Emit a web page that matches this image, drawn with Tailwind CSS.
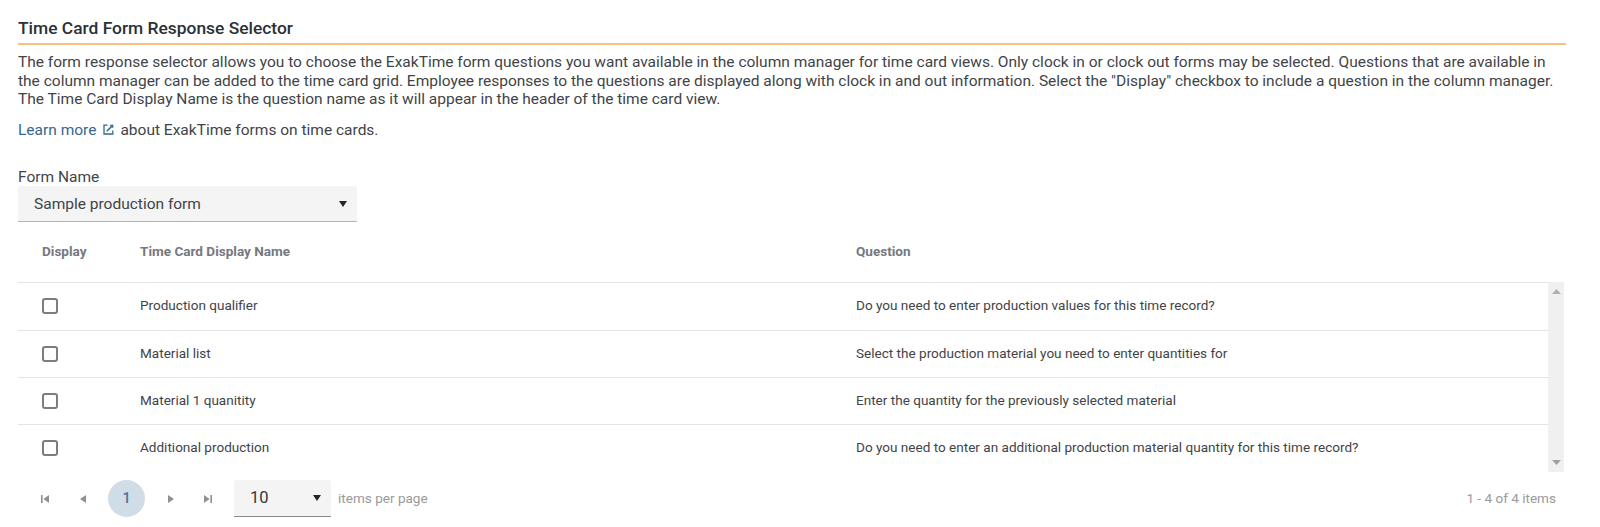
<!DOCTYPE html>
<html><head><meta charset="utf-8">
<script src="https://cdn.jsdelivr.net/npm/@tailwindcss/browser@4"></script>
</head>
<body class="bg-white font-['Roboto',sans-serif] text-[#3f4448] overflow-hidden">
<div class="w-[1600px] h-[527px] pl-[18px] pr-[34px] pt-[18px] flex flex-col">
  <h2 class="text-[17.4px] leading-[20px] font-medium text-[#2b3035] h-[27px] border-b-2 border-[#f8c27e]">Time Card Form Response Selector</h2>
  <p class="text-[15.5px] leading-[18.7px] mt-[8px] w-[1536px]">The form response selector allows you to choose the ExakTime form questions you want available in the column manager for time card views. Only clock in or clock out forms may be selected. Questions that are available in the column manager can be added to the time card grid. Employee responses to the questions are displayed along with clock in and out information. Select the "Display" checkbox to include a question in the column manager. The Time Card Display Name is the question name as it will appear in the header of the time card view.</p>
  <p class="text-[15.5px] leading-[18.7px] mt-[11.4px] flex items-center">
    <span class="text-[#36678c]">Learn more</span>
    <svg class="ml-[7px] mr-[6px]" width="11" height="11" viewBox="0 0 11 11" fill="none" stroke="#36678c" stroke-width="1.3"><path d="M4.5 1.2H1v8.8h8.8V6.5"/><path d="M6.5 .7h3.8v3.8z" fill="#36678c" stroke="none"/><path d="M3.8 7.2 8.6 2.4" stroke-width="1.5"/></svg>
    <span>about ExakTime forms on time cards.</span>
  </p>
  <label class="block text-[15.5px] leading-[18px] mt-[29px]">Form Name</label>
  <div class="w-[339px] h-[36px] bg-[#f4f4f4] rounded-t-[3px] border-b border-[#b5b5b5] flex items-center justify-between pl-[16px] pr-[10px] text-[15.5px]">
    <span class="pt-[1px]">Sample production form</span>
    <svg width="8" height="6" viewBox="0 0 8 6"><path d="M0 0h8L4 6z" fill="#22272b"/></svg>
  </div>
  <div class="flex items-center h-[60px] pb-[2px] text-[13.55px] font-bold text-[#75797e]">
    <div class="w-[122px] pl-[24px]">Display</div>
    <div class="w-[716px]">Time Card Display Name</div>
    <div>Question</div>
  </div>
  <div class="flex h-[190px] w-[1546px]">
    <div class="flex-1 text-[13.55px]">
      <div class="flex items-center h-[47.33px] border-t border-[#e4e4e4]">
        <div class="w-[122px] pl-[24px]"><div class="w-[16px] h-[16px] rounded-[3px] border-2 border-[#7d7d7d]"></div></div>
        <div class="w-[716px] pb-[2px]">Production qualifier</div>
        <div class="pb-[2px]">Do you need to enter production values for this time record?</div>
      </div>
      <div class="flex items-center h-[47.33px] border-t border-[#e4e4e4]">
        <div class="w-[122px] pl-[24px]"><div class="w-[16px] h-[16px] rounded-[3px] border-2 border-[#7d7d7d]"></div></div>
        <div class="w-[716px] pb-[2px]">Material list</div>
        <div class="pb-[2px]">Select the production material you need to enter quantities for</div>
      </div>
      <div class="flex items-center h-[47.33px] border-t border-[#e4e4e4]">
        <div class="w-[122px] pl-[24px]"><div class="w-[16px] h-[16px] rounded-[3px] border-2 border-[#7d7d7d]"></div></div>
        <div class="w-[716px] pb-[2px]">Material 1 quanitity</div>
        <div class="pb-[2px]">Enter the quantity for the previously selected material</div>
      </div>
      <div class="flex items-center h-[47.33px] border-t border-[#e4e4e4]">
        <div class="w-[122px] pl-[24px]"><div class="w-[16px] h-[16px] rounded-[3px] border-2 border-[#7d7d7d]"></div></div>
        <div class="w-[716px] pb-[2px]">Additional production</div>
        <div class="pb-[2px]">Do you need to enter an additional production material quantity for this time record?</div>
      </div>
    </div>
    <div class="w-[16px] bg-[#f0f0f0] flex flex-col items-center justify-between py-[7px]">
      <svg width="9" height="5" viewBox="0 0 9 5"><path d="M0 5h9L4.5 0z" fill="#b0b0b0"/></svg>
      <svg width="9" height="5" viewBox="0 0 9 5"><path d="M0 0h9L4.5 5z" fill="#a0a0a0"/></svg>
    </div>
  </div>
  <div class="flex items-center justify-between h-[37px] mt-[8px] w-[1538px] pl-[23px]">
    <div class="flex items-center">
      <svg class="mr-[31px]" width="8" height="8" viewBox="0 0 8 8"><path d="M0 0h1.6v8H0zM8 0v8L2.4 4z" fill="#8f8f96"/></svg>
      <svg class="mr-[22px]" width="6" height="8" viewBox="0 0 6 8"><path d="M6 0v8L0 4z" fill="#8f8f96"/></svg>
      <div class="w-[37px] h-[37px] rounded-full bg-[#d0dce6] flex items-center justify-center text-[14.5px] font-medium text-[#4a7596]">1</div>
      <svg class="ml-[23px] mr-[30px]" width="6" height="8" viewBox="0 0 6 8"><path d="M0 0v8l6-4z" fill="#8f8f96"/></svg>
      <svg class="mr-[22px]" width="8" height="8" viewBox="0 0 8 8"><path d="M0 0v8l5.6-4zM6.4 0H8v8H6.4z" fill="#8f8f96"/></svg>
      <div class="w-[97px] h-[37px] bg-[#f4f4f4] rounded-t-[3px] border-b border-[#8a8a8a] flex items-center justify-between pl-[16px] pr-[10px] text-[16.5px] text-[#33383c]">
        <span>10</span>
        <svg width="8" height="6" viewBox="0 0 8 6"><path d="M0 0h8L4 6z" fill="#22272b"/></svg>
      </div>
      <span class="ml-[7px] pb-[2px] text-[13.55px] text-[#9a9a9a]">items per page</span>
    </div>
    <span class="pb-[2px] text-[13.55px] text-[#9a9a9a]">1 - 4 of 4 items</span>
  </div>
</div>
</body></html>
